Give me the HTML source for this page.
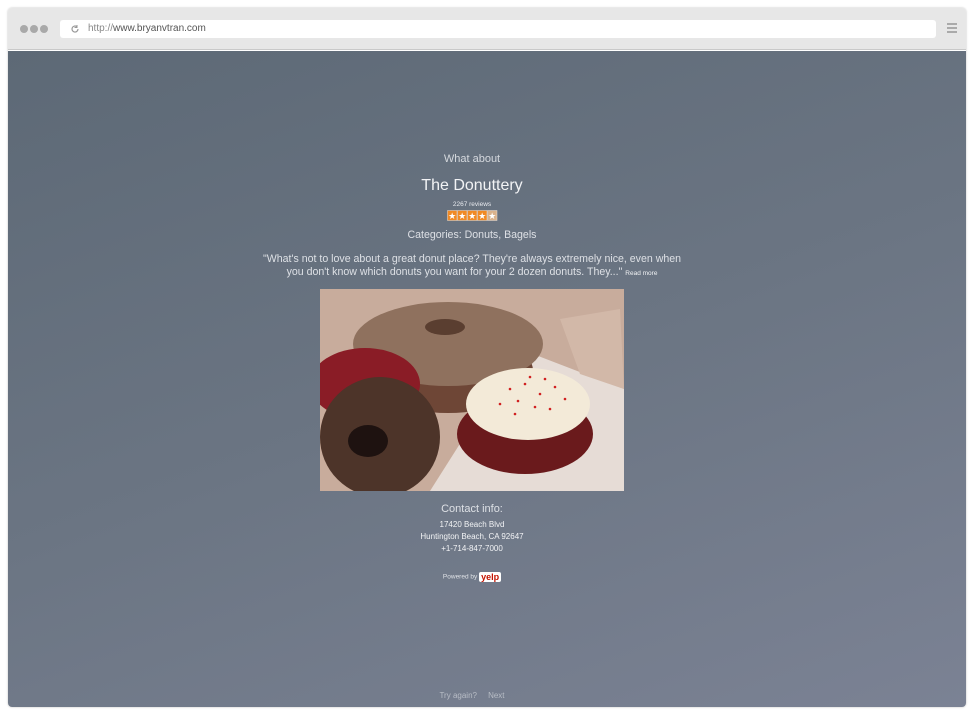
<!DOCTYPE html>
<html><head><meta charset="utf-8"><style>
*{margin:0;padding:0;box-sizing:border-box}
body{width:973px;height:716px;background:#fff;font-family:"Liberation Sans",Helvetica,Arial,sans-serif;position:relative;overflow:hidden}
.win{position:absolute;left:8px;top:8px;width:958px;height:699px;border-radius:4px;overflow:hidden;box-shadow:0 0 2px rgba(0,0,0,.25)}
.bar{height:42px;background:#e7e7e7;position:relative;border-bottom:1px solid #c9c9c9}
.dot{position:absolute;top:17px;width:8px;height:8px;border-radius:50%;background:#a9a9a9}
.url{position:absolute;left:52px;top:12px;width:876px;height:18px;background:#fff;border-radius:3px;font-size:10px;color:#888;line-height:18px;padding-left:28px}
.url b{font-weight:normal;color:#555}
.ham{position:absolute;right:9px;top:15px;width:10px}
.ham i{display:block;height:2px;background:#aaa;margin-bottom:2px}
.content{position:absolute;top:43px;left:0;right:0;bottom:0;background:linear-gradient(160deg,#5d6976 0%,#6b7583 50%,#7b8294 100%);color:#e3e6ea;text-align:center}
.t{position:absolute;left:0;width:928px}
</style></head><body>
<div class="win">
 <div class="bar">
  <div class="dot" style="left:12px"></div><div class="dot" style="left:22px"></div><div class="dot" style="left:32px"></div>
  <div class="url"><svg style="position:absolute;left:10px;top:4px" width="10" height="10" viewBox="0 0 10 10"><path d="M8 5a3 3 0 1 1-1-2.2" fill="none" stroke="#999" stroke-width="1.2"/><path d="M7 1v2.5h-2.5" fill="none" stroke="#999" stroke-width="1"/></svg>http://<b>www.bryanvtran.com</b></div>
  <div class="ham"><i></i><i></i><i></i></div>
 </div>
 <div class="content">
  <div class="t" style="top:102px;font-size:11px;color:#d5d9de">What about</div>
  <div class="t" style="top:126px;font-size:16px;color:#f2f3f5">The Donuttery</div>
  <div class="t" style="top:150px;font-size:6.5px;color:#e8eaee">2267 reviews</div>
  <div class="t" style="top:157px;height:10px"><svg width="51" height="11" viewBox="0 0 51 11"><g fill="#f08a24" stroke="#e8e0d8" stroke-width=".5"><rect x=".5" y=".5" width="9.5" height="10"/><rect x="10.5" y=".5" width="9.5" height="10"/><rect x="20.5" y=".5" width="9.5" height="10"/><rect x="30.5" y=".5" width="9.5" height="10"/><rect x="40.5" y=".5" width="9.5" height="10" fill="#d9b28c"/></g><g fill="#fff"><text x="5.2" y="9" font-size="9" text-anchor="middle">★</text><text x="15.2" y="9" font-size="9" text-anchor="middle">★</text><text x="25.2" y="9" font-size="9" text-anchor="middle">★</text><text x="35.2" y="9" font-size="9" text-anchor="middle">★</text><text x="45.2" y="9" font-size="9" text-anchor="middle">★</text></g></svg></div>
  <div class="t" style="top:178px;font-size:10.6px;color:#dde0e5">Categories: Donuts, Bagels</div>
  <div class="t" style="top:202px;font-size:10.6px;line-height:12.5px;color:#dde0e5">"What's not to love about a great donut place? They're always extremely nice, even when<br>you don't know which donuts you want for your 2 dozen donuts. They..." <span style="font-size:6.5px;color:#f2f3f5">Read more</span></div>
  <svg style="position:absolute;left:312px;top:238px" width="304" height="202" viewBox="0 0 304 202">
   <rect width="304" height="202" fill="#c8ac9c"/>
   <path d="M200 60 L304 100 L304 202 L110 202 Z" fill="#e6dcd6"/>
   <path d="M240 30 L300 20 L304 100 L260 85Z" fill="#d2b8a8"/>
   <ellipse cx="128" cy="82" rx="85" ry="42" fill="#6e4636"/>
   <ellipse cx="128" cy="55" rx="95" ry="42" fill="#8f715e"/>
   <ellipse cx="125" cy="38" rx="20" ry="8" fill="#5a3e30"/>
   <ellipse cx="45" cy="95" rx="55" ry="36" fill="#8a1c26"/>
   <ellipse cx="60" cy="148" rx="60" ry="60" fill="#4d3429"/>
   <ellipse cx="48" cy="152" rx="20" ry="16" fill="#1e1210"/>
   <ellipse cx="205" cy="145" rx="68" ry="40" fill="#6a1a1c"/>
   <ellipse cx="208" cy="115" rx="62" ry="36" fill="#f3ead8"/>
   <g fill="#d02020"><circle cx="190" cy="100" r="1.3"/><circle cx="205" cy="95" r="1.3"/><circle cx="220" cy="105" r="1.3"/><circle cx="235" cy="98" r="1.3"/><circle cx="198" cy="112" r="1.3"/><circle cx="215" cy="118" r="1.3"/><circle cx="230" cy="120" r="1.3"/><circle cx="180" cy="115" r="1.3"/><circle cx="245" cy="110" r="1.3"/><circle cx="210" cy="88" r="1.3"/><circle cx="225" cy="90" r="1.3"/><circle cx="195" cy="125" r="1.3"/></g>
  </svg>
  <div class="t" style="top:452px;font-size:11px;color:#dde0e5">Contact info:</div>
  <div class="t" style="top:468px;font-size:8px;line-height:12px;color:#f2f3f5">17420 Beach Blvd<br>Huntington Beach, CA 92647<br>+1-714-847-7000</div>
  <div class="t" style="top:521px;font-size:6.5px;color:#e0e3e7">Powered by <span style="display:inline-block;background:#fff;color:#c41200;font-weight:bold;font-size:9px;padding:0 2px;border-radius:2px;vertical-align:middle">yelp</span></div>
  <div class="t" style="top:640px;font-size:8px;color:#b8bdc6">Try again? &nbsp;&nbsp;&nbsp; Next</div>
 </div>
</div>
</body></html>
